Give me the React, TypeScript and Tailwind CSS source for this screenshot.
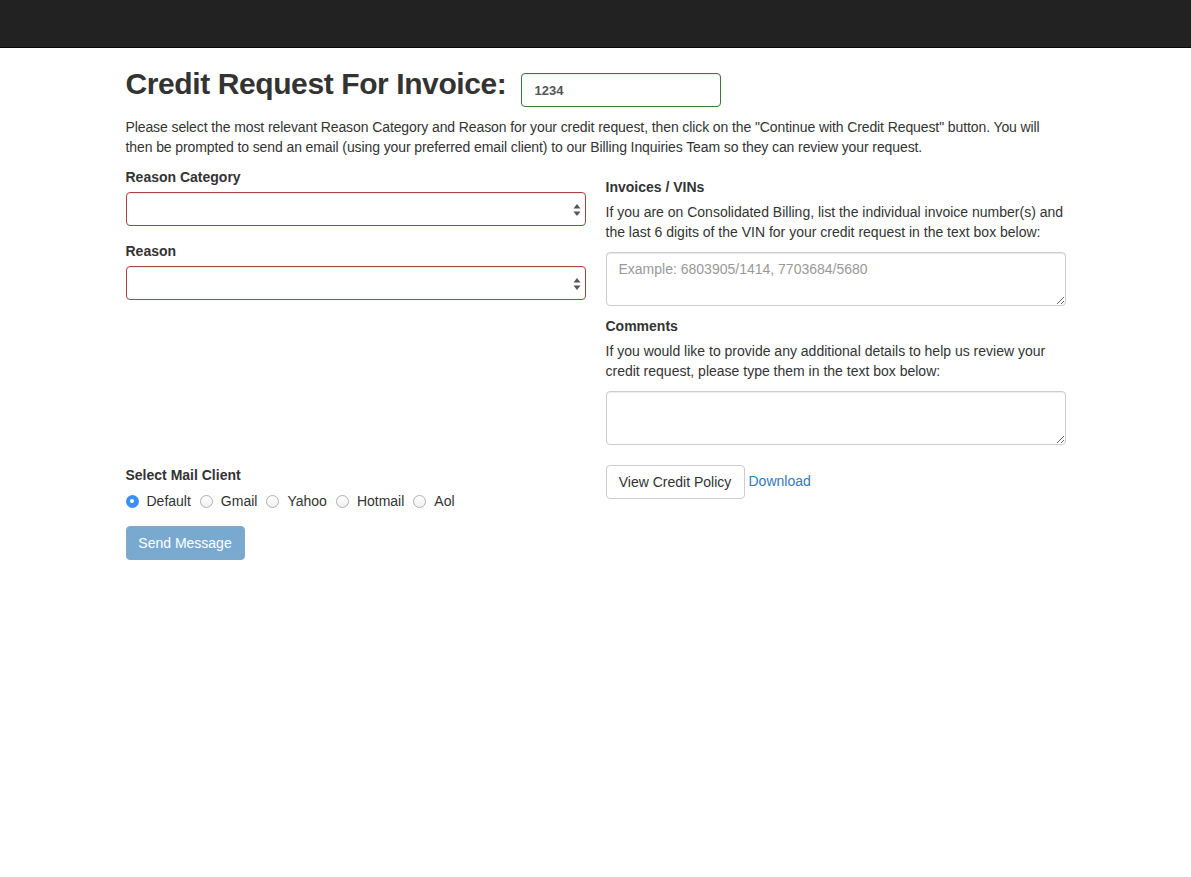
import React from "react";

const font = { fontFamily: '"Liberation Sans", Arial, sans-serif' };

function FakeSelect() {
  return (
    <div className="relative h-[34px] w-full rounded-[4px] border border-[#a94442] bg-white shadow-[inset_0_1px_1px_rgba(0,0,0,0.075)]">
      <svg
        className="absolute right-[4px] top-[10px]"
        width="8"
        height="14"
        viewBox="0 0 8 14"
      >
        <path d="M4 1 L7.5 5.5 L0.5 5.5 Z" fill="#555" />
        <path d="M4 13 L7.5 8.5 L0.5 8.5 Z" fill="#555" />
      </svg>
    </div>
  );
}

function Radio({ label, checked }: { label: string; checked?: boolean }) {
  return (
    <label className="flex items-center gap-[8px]">
      {checked ? (
        <span className="flex h-[13px] w-[13px] items-center justify-center rounded-full bg-[#3b8ef5]">
          <span className="h-[4px] w-[4px] rounded-full bg-white" />
        </span>
      ) : (
        <span className="h-[13px] w-[13px] rounded-full border border-[#b0b0b0] bg-gradient-to-b from-white to-[#f0f0f0]" />
      )}
      <span>{label}</span>
    </label>
  );
}

export default function App() {
  return (
    <div className="min-h-[877px] bg-white text-[14px] leading-[20px] text-[#333]" style={font}>
      <nav className="h-[48px] border-b border-[#080808] bg-[#222]" />

      <main className="mx-auto w-[940px]">
        <div className="flex items-start">
          <h2 className="mt-[19px] w-[395px] text-[30px] font-bold leading-[34px] tracking-[-0.4px]">
            Credit Request For Invoice:
          </h2>
          <input
            defaultValue="1234"
            className="mt-[25px] h-[34px] w-[200px] rounded-[4px] border border-[#3c763d] px-[13px] text-[13px] font-bold text-[#555] outline-none shadow-[inset_0_1px_1px_rgba(0,0,0,0.075)]"
          />
        </div>

        <p className="mt-[10px] tracking-[-0.1px]">
          Please select the most relevant Reason Category and Reason for your credit request, then
          click on the "Continue with Credit Request" button. You will then be prompted to send an
          email (using your preferred email client) to our Billing Inquiries Team so they can
          review your request.
        </p>

        <div className="mt-[10px] grid grid-cols-[460px_460px] gap-x-[20px] gap-y-[20px]">
          <div>
            <div className="mb-[5px] font-bold">Reason Category</div>
            <FakeSelect />
            <div className="mb-[5px] mt-[15px] font-bold">Reason</div>
            <FakeSelect />
          </div>

          <div className="pt-[10px]">
            <div className="mb-[5px] font-bold">Invoices / VINs</div>
            <p>
              If you are on Consolidated Billing, list the individual invoice number(s) and the
              last 6 digits of the VIN for your credit request in the text box below:
            </p>
            <textarea
              placeholder="Example: 6803905/1414, 7703684/5680"
              className="mt-[10px] block h-[54px] w-full rounded-[4px] border border-[#ccc] px-[12px] py-[6px] outline-none placeholder:text-[#999] shadow-[inset_0_1px_1px_rgba(0,0,0,0.075)]"
            />
            <div className="mb-[5px] mt-[10px] font-bold">Comments</div>
            <p>
              If you would like to provide any additional details to help us review your credit
              request, please type them in the text box below:
            </p>
            <textarea className="mt-[10px] block h-[54px] w-full rounded-[4px] border border-[#ccc] px-[12px] py-[6px] outline-none shadow-[inset_0_1px_1px_rgba(0,0,0,0.075)]" />
          </div>

          <div>
            <div className="mb-[6px] font-bold">Select Mail Client</div>
            <div className="flex items-center gap-[9px]">
              <Radio label="Default" checked />
              <Radio label="Gmail" />
              <Radio label="Yahoo" />
              <Radio label="Hotmail" />
              <Radio label="Aol" />
            </div>
            <button className="mt-[15px] h-[34px] w-[119px] rounded-[4px] border border-[#82a7c8] bg-[#7aa9d0] text-white">
              Send Message
            </button>
          </div>

          <div className="flex items-start">
            <button className="h-[34px] w-[139px] rounded-[4px] border border-[#ccc] bg-white">
              View Credit Policy
            </button>
            <a className="ml-[4px] mt-[6px] text-[#337ab7]" href="#">
              Download
            </a>
          </div>
        </div>
      </main>
    </div>
  );
}
